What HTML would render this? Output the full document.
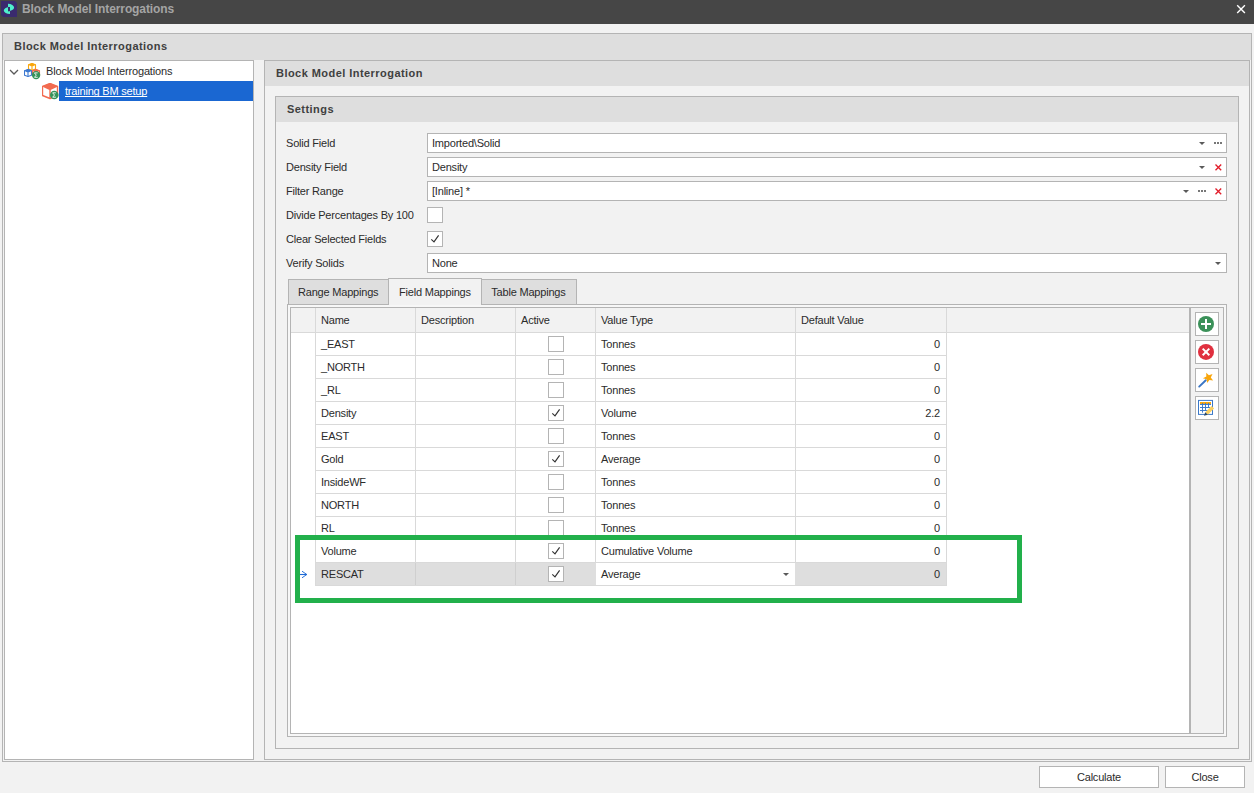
<!DOCTYPE html>
<html><head><meta charset="utf-8">
<style>
*{box-sizing:border-box;margin:0;padding:0}
html,body{width:1254px;height:793px;overflow:hidden;background:#f2f2f2;font-family:"Liberation Sans",sans-serif;font-size:11px;color:#2b2b2b;letter-spacing:-0.2px}
.a{position:absolute}
.b{border:1px solid #b4b4b4}
.t{position:absolute;white-space:pre;line-height:13px}
.bold{font-weight:bold;letter-spacing:0.45px;color:#404040}
.hdr{background:#dedede}
.inp{position:absolute;background:#fff;border:1px solid #b4b4b4;height:20px;left:427px;width:800px}
.inp span{position:absolute;left:4px;top:0;line-height:18px}
.lbl{position:absolute;left:286px;line-height:20px;height:20px}
.cb{position:absolute;width:16px;height:16px;background:#fff;border:1px solid #b4b4b4}
.cb.on::after{content:"";position:absolute;left:3px;top:2px;width:8px;height:9px;}
.hl{position:absolute;height:1px;background:#d9d9d9}
.vl{position:absolute;width:1px;background:#d9d9d9}
.cell{position:absolute;line-height:23px;white-space:pre}
</style></head><body>
<!-- title bar -->
<div class="a" style="left:0;top:0;width:1254px;height:24px;background:#464646"></div>
<svg class="a" style="left:1px;top:1px" width="16" height="16" viewBox="0 0 16 16">
<path d="M0 0H14L16 2V16H2L0 14Z" fill="#3a2a6e"/>
<path d="M7 2.8A6.1 3.7 0 0 1 7 10.2ZM9 6A6.2 3.5 0 0 0 9 13Z" fill="#4ff0cc"/>
<rect x="7" y="6" width="2" height="4.2" fill="#3a2a6e"/>
</svg>
<div class="t bold" style="left:22px;top:3px;color:#a4a4a4;font-size:12px;letter-spacing:-0.1px">Block Model Interrogations</div>
<svg class="a" style="left:1236px;top:4px" width="11" height="11" viewBox="0 0 11 11"><path d="M1.2 1.2L8.9 8.9M8.9 1.2L1.2 8.9" stroke="#fff" stroke-width="1.4"/></svg>

<!-- outer group -->
<div class="a b" style="left:2px;top:33px;width:1250px;height:729px"></div>
<div class="a hdr" style="left:3px;top:34px;width:1248px;height:26px"></div>
<div class="t bold" style="left:14px;top:40px">Block Model Interrogations</div>

<!-- tree -->
<div class="a b" style="left:4px;top:60px;width:250px;height:700px;background:#fff"></div>
<svg class="a" style="left:9px;top:68px" width="10" height="8"><path d="M1 2L5 6L9 2" fill="none" stroke="#5a5a5a" stroke-width="1.3"/></svg>
<svg class="a" style="left:24px;top:63px" width="17" height="17" viewBox="0 0 17 17"><path d="M8.0 0.5L11.5 1.76V6.04L8.0 7.3L4.5 6.04V1.76Z" fill="#fff" stroke="#f9a60c" stroke-width="1.1" stroke-linejoin="round"/><path d="M8.0 0L12 1.76L8.0 3.82L4 1.76Z" fill="#f9a60c"/><path d="M8.0 3.52V7.3" stroke="#f9a60c" stroke-width="1.1"/><path d="M4.0 6.5L7.5 7.76V12.24L4.0 13.5L0.5 12.24V7.76Z" fill="#fff" stroke="#3b78d0" stroke-width="1.1" stroke-linejoin="round"/><path d="M4.0 6L8 7.76L4.0 9.82L0 7.76Z" fill="#3b78d0"/><path d="M4.0 9.52V13.5" stroke="#3b78d0" stroke-width="1.1"/><path d="M12.0 6.5L15.5 7.76V12.24L12.0 13.5L8.5 12.24V7.76Z" fill="#fff" stroke="#f26b50" stroke-width="1.1" stroke-linejoin="round"/><path d="M12.0 6L16 7.76L12.0 9.82L8 7.76Z" fill="#f26b50"/><path d="M12.0 9.52V13.5" stroke="#f26b50" stroke-width="1.1"/><circle cx="12.1" cy="12.1" r="4.2" fill="#36935a"/><path d="M10.4 9.9H13.6M10.5 10L12.3 12.1L10.5 14.3H13.7" fill="none" stroke="#eaf6ee" stroke-width="1"/></svg>
<svg class="a" style="left:42px;top:83px" width="17" height="17" viewBox="0 0 17 17"><path d="M8.0 0.5L15.5 3.52V12.48L8.0 15.5L0.5 12.48V3.52Z" fill="#fff" stroke="#f26b50" stroke-width="1.4" stroke-linejoin="round"/><path d="M8.0 0L16 3.52L8.0 7.34L0 3.52Z" fill="#f26b50"/><path d="M8.0 7.04V15.5" stroke="#f26b50" stroke-width="1.4"/><circle cx="12.3" cy="12" r="4.3" fill="#36935a"/><path d="M10.6 9.8H13.8M10.7 9.9L12.5 12L10.7 14.2H13.9" fill="none" stroke="#eaf6ee" stroke-width="1"/></svg>
<div class="t" style="left:46px;top:65px;letter-spacing:-0.15px">Block Model Interrogations</div>
<div class="a" style="left:59px;top:81px;width:194px;height:20px;background:#1a67d2"></div>
<div class="t" style="left:65px;top:85px;color:#fff;text-decoration:underline;text-decoration-skip-ink:none">training BM setup</div>


<!-- right panel -->
<div class="a b" style="left:264px;top:60px;width:986px;height:700px"></div>
<div class="a hdr" style="left:265px;top:61px;width:984px;height:25px"></div>
<div class="t bold" style="left:276px;top:67px">Block Model Interrogation</div>

<!-- settings group -->
<div class="a b" style="left:275px;top:96px;width:964px;height:653px"></div>
<div class="a hdr" style="left:276px;top:97px;width:962px;height:25px"></div>
<div class="t bold" style="left:287px;top:103px">Settings</div>

<div id="form">
<div class="lbl" style="top:133px">Solid Field</div>
<div class="inp" style="top:133px"><span>Imported\Solid</span>
<svg class="a" style="left:771px;top:8px" width="6" height="3"><path d="M0 0H6L3 3Z" fill="#5a5a5a"/></svg>
<svg class="a" style="left:786px;top:8px" width="8" height="2"><rect x="0" y="0" width="2" height="2" fill="#777"/><rect x="3" y="0" width="2" height="2" fill="#777"/><rect x="6" y="0" width="2" height="2" fill="#777"/></svg>
</div>
<div class="lbl" style="top:157px">Density Field</div>
<div class="inp" style="top:157px"><span>Density</span>
<svg class="a" style="left:771px;top:8px" width="6" height="3"><path d="M0 0H6L3 3Z" fill="#5a5a5a"/></svg>
<svg class="a" style="left:787px;top:6px" width="7" height="7"><path d="M0.5 0.5L6.2 6.2M6.2 0.5L0.5 6.2" stroke="#e21d2a" stroke-width="1.35"/></svg>
</div>
<div class="lbl" style="top:181px">Filter Range</div>
<div class="inp" style="top:181px"><span>[Inline] *</span>
<svg class="a" style="left:755px;top:8px" width="6" height="3"><path d="M0 0H6L3 3Z" fill="#5a5a5a"/></svg>
<svg class="a" style="left:770px;top:8px" width="8" height="2"><rect x="0" y="0" width="2" height="2" fill="#777"/><rect x="3" y="0" width="2" height="2" fill="#777"/><rect x="6" y="0" width="2" height="2" fill="#777"/></svg>
<svg class="a" style="left:787px;top:6px" width="7" height="7"><path d="M0.5 0.5L6.2 6.2M6.2 0.5L0.5 6.2" stroke="#e21d2a" stroke-width="1.35"/></svg>
</div>
<div class="lbl" style="top:205px">Divide Percentages By 100</div>
<div class="cb" style="left:427px;top:207px"></div>
<div class="lbl" style="top:229px">Clear Selected Fields</div>
<div class="cb" style="left:427px;top:231px"><svg class="a" style="left:0;top:0" width="14" height="14"><path d="M3.3 7.4L6 9.9L10.6 3.3" fill="none" stroke="#333" stroke-width="1.15"/></svg></div>
<div class="lbl" style="top:253px">Verify Solids</div>
<div class="inp" style="top:253px"><span>None</span>
<svg class="a" style="left:787px;top:8px" width="6" height="3"><path d="M0 0H6L3 3Z" fill="#5a5a5a"/></svg>
</div>
</div>
<div id="tabs">
<div class="a b" style="left:287px;top:304px;width:940px;height:433px;background:#f7f7f7"></div>
<div class="a b" style="left:288px;top:279px;width:101px;height:26px;background:#dedede"></div>
<div class="a b" style="left:481px;top:279px;width:96px;height:26px;background:#dedede"></div>
<div class="a b" style="left:388px;top:278px;width:94px;height:27px;background:#f2f2f2;border-bottom:none"></div>
<div class="t" style="left:298px;top:286px">Range Mappings</div>
<div class="t" style="left:399px;top:286px">Field Mappings</div>
<div class="t" style="left:491.3px;top:286px">Table Mappings</div>
</div>
<div id="grid">
<div class="a b" style="left:290px;top:307px;width:934px;height:427px;background:#fff;border-right:none"></div>
<div class="a" style="left:291px;top:308px;width:898px;height:24px;background:#f2f2f2"></div>
<div class="a" style="left:1189px;top:307px;width:2px;height:427px;background:#b4b4b4"></div>
<div class="a" style="left:1191px;top:308px;width:32px;height:425px;background:#f2f2f2"></div>
<div class="a" style="left:1223px;top:307px;width:1px;height:427px;background:#b4b4b4"></div>
<div class="hl" style="left:291px;top:332px;width:898px"></div>
<div class="vl" style="left:315px;top:308px;height:277px"></div>
<div class="vl" style="left:415px;top:308px;height:277px"></div>
<div class="vl" style="left:515px;top:308px;height:277px"></div>
<div class="vl" style="left:595px;top:308px;height:277px"></div>
<div class="vl" style="left:795px;top:308px;height:277px"></div>
<div class="vl" style="left:946px;top:308px;height:277px"></div>
<div class="a" style="left:316px;top:563px;width:630px;height:22px;background:#dedede"></div>
<div class="a" style="left:596px;top:563px;width:199px;height:22px;background:#fff"></div>
<div class="vl" style="left:415px;top:563px;height:22px;background:#cfcfcf"></div>
<div class="vl" style="left:515px;top:563px;height:22px;background:#cfcfcf"></div>
<div class="hl" style="left:315px;top:355px;width:632px"></div>
<div class="hl" style="left:315px;top:378px;width:632px"></div>
<div class="hl" style="left:315px;top:401px;width:632px"></div>
<div class="hl" style="left:315px;top:424px;width:632px"></div>
<div class="hl" style="left:315px;top:447px;width:632px"></div>
<div class="hl" style="left:315px;top:470px;width:632px"></div>
<div class="hl" style="left:315px;top:493px;width:632px"></div>
<div class="hl" style="left:315px;top:516px;width:632px"></div>
<div class="hl" style="left:315px;top:539px;width:632px"></div>
<div class="hl" style="left:315px;top:562px;width:632px"></div>
<div class="hl" style="left:315px;top:585px;width:632px"></div>
<div class="cell" style="left:321px;top:308px;line-height:24px">Name</div>
<div class="cell" style="left:421px;top:308px;line-height:24px">Description</div>
<div class="cell" style="left:521px;top:308px;line-height:24px">Active</div>
<div class="cell" style="left:601px;top:308px;line-height:24px">Value Type</div>
<div class="cell" style="left:801px;top:308px;line-height:24px">Default Value</div>
<div class="cell" style="left:321px;top:333px;line-height:22px">_EAST</div>
<div class="cb" style="left:548px;top:336px"></div>
<div class="cell" style="left:601px;top:333px;line-height:22px">Tonnes</div>
<div class="cell" style="left:796px;top:333px;width:144px;text-align:right;line-height:22px">0</div>
<div class="cell" style="left:321px;top:356px;line-height:22px">_NORTH</div>
<div class="cb" style="left:548px;top:359px"></div>
<div class="cell" style="left:601px;top:356px;line-height:22px">Tonnes</div>
<div class="cell" style="left:796px;top:356px;width:144px;text-align:right;line-height:22px">0</div>
<div class="cell" style="left:321px;top:379px;line-height:22px">_RL</div>
<div class="cb" style="left:548px;top:382px"></div>
<div class="cell" style="left:601px;top:379px;line-height:22px">Tonnes</div>
<div class="cell" style="left:796px;top:379px;width:144px;text-align:right;line-height:22px">0</div>
<div class="cell" style="left:321px;top:402px;line-height:22px">Density</div>
<div class="cb" style="left:548px;top:405px"><svg class="a" style="left:0;top:0" width="14" height="14"><path d="M3.3 7.4L6 9.9L10.6 3.3" fill="none" stroke="#333" stroke-width="1.15"/></svg></div>
<div class="cell" style="left:601px;top:402px;line-height:22px">Volume</div>
<div class="cell" style="left:796px;top:402px;width:144px;text-align:right;line-height:22px">2.2</div>
<div class="cell" style="left:321px;top:425px;line-height:22px">EAST</div>
<div class="cb" style="left:548px;top:428px"></div>
<div class="cell" style="left:601px;top:425px;line-height:22px">Tonnes</div>
<div class="cell" style="left:796px;top:425px;width:144px;text-align:right;line-height:22px">0</div>
<div class="cell" style="left:321px;top:448px;line-height:22px">Gold</div>
<div class="cb" style="left:548px;top:451px"><svg class="a" style="left:0;top:0" width="14" height="14"><path d="M3.3 7.4L6 9.9L10.6 3.3" fill="none" stroke="#333" stroke-width="1.15"/></svg></div>
<div class="cell" style="left:601px;top:448px;line-height:22px">Average</div>
<div class="cell" style="left:796px;top:448px;width:144px;text-align:right;line-height:22px">0</div>
<div class="cell" style="left:321px;top:471px;line-height:22px">InsideWF</div>
<div class="cb" style="left:548px;top:474px"></div>
<div class="cell" style="left:601px;top:471px;line-height:22px">Tonnes</div>
<div class="cell" style="left:796px;top:471px;width:144px;text-align:right;line-height:22px">0</div>
<div class="cell" style="left:321px;top:494px;line-height:22px">NORTH</div>
<div class="cb" style="left:548px;top:497px"></div>
<div class="cell" style="left:601px;top:494px;line-height:22px">Tonnes</div>
<div class="cell" style="left:796px;top:494px;width:144px;text-align:right;line-height:22px">0</div>
<div class="cell" style="left:321px;top:517px;line-height:22px">RL</div>
<div class="cb" style="left:548px;top:520px"></div>
<div class="cell" style="left:601px;top:517px;line-height:22px">Tonnes</div>
<div class="cell" style="left:796px;top:517px;width:144px;text-align:right;line-height:22px">0</div>
<div class="cell" style="left:321px;top:540px;line-height:22px">Volume</div>
<div class="cb" style="left:548px;top:543px"><svg class="a" style="left:0;top:0" width="14" height="14"><path d="M3.3 7.4L6 9.9L10.6 3.3" fill="none" stroke="#333" stroke-width="1.15"/></svg></div>
<div class="cell" style="left:601px;top:540px;line-height:22px">Cumulative Volume</div>
<div class="cell" style="left:796px;top:540px;width:144px;text-align:right;line-height:22px">0</div>
<div class="cell" style="left:321px;top:563px;line-height:22px">RESCAT</div>
<div class="cb" style="left:548px;top:566px"><svg class="a" style="left:0;top:0" width="14" height="14"><path d="M3.3 7.4L6 9.9L10.6 3.3" fill="none" stroke="#333" stroke-width="1.15"/></svg></div>
<div class="cell" style="left:601px;top:563px;line-height:22px">Average</div>
<div class="cell" style="left:796px;top:563px;width:144px;text-align:right;line-height:22px">0</div>
<svg class="a" style="left:783px;top:573px" width="6" height="3"><path d="M0 0H6L3 3Z" fill="#5a5a5a"/></svg>
<svg class="a" style="left:296px;top:569px" width="14" height="10"><path d="M1 5.5H10.8" stroke="#1f6ad6" stroke-width="1.1"/><path d="M6 2.2L10.8 5.5L6 8.8" fill="none" stroke="#1f6ad6" stroke-width="0.95"/></svg>
<div class="a" style="left:1195px;top:312px;width:24px;height:24px;background:#fff;border:1px solid #b4b4b4"></div>
<div class="a" style="left:1195px;top:340px;width:24px;height:24px;background:#fff;border:1px solid #b4b4b4"></div>
<div class="a" style="left:1195px;top:368px;width:24px;height:24px;background:#fff;border:1px solid #b4b4b4"></div>
<div class="a" style="left:1195px;top:396px;width:24px;height:24px;background:#fff;border:1px solid #b4b4b4"></div>
<svg class="a" style="left:1195px;top:312px" width="24" height="24" viewBox="0 0 24 24"><circle cx="11" cy="12" r="8" fill="#3b9159"/><rect x="6" y="11" width="10" height="2" fill="#fff"/><rect x="10" y="7" width="2" height="10" fill="#fff"/></svg>
<svg class="a" style="left:1195px;top:340px" width="24" height="24" viewBox="0 0 24 24"><circle cx="11" cy="11.9" r="8" fill="#e0303f"/><path d="M7.7 8.6L14.3 15.2M14.3 8.6L7.7 15.2" stroke="#fff" stroke-width="2"/></svg>
<svg class="a" style="left:1195px;top:368px" width="24" height="24" viewBox="0 0 24 24"><path d="M4.2 18.6L10.8 12.2" stroke="#3a75c4" stroke-width="1.9" stroke-linecap="round"/><path d="M11.21 4.66L13.92 7.36L17.52 6.06L15.79 9.47L18.14 12.49L14.36 11.90L12.21 15.07L11.60 11.29L7.93 10.23L11.33 8.48Z" fill="#f9a60c"/></svg>
<svg class="a" style="left:1195px;top:396px" width="24" height="24" viewBox="0 0 24 24"><rect x="3.5" y="4.4" width="14" height="14" fill="#fff" stroke="#3a78c8" stroke-width="1"/><rect x="5" y="6" width="11" height="2.2" fill="#f9a60c"/><path d="M5 8.5H16M5 11.5H15M5 14.5H13M7.5 7V16.7M10.5 7V15M13.5 7V12" stroke="#3a78c8" stroke-width="0.95"/><path d="M10.3 16.2L16.6 9.9L19.1 12.4L12.8 18.7Z" fill="#fcd060"/><path d="M10.3 16.2L12.8 18.7L9 19.8Z" fill="#2b4765"/></svg>
</div>
<div id="bottom">
<div class="a" style="left:1039px;top:766px;width:120px;height:22px;background:#fff;border:1px solid #b4b4b4;text-align:center;line-height:20px">Calculate</div>
<div class="a" style="left:1165px;top:766px;width:80px;height:22px;background:#fff;border:1px solid #b4b4b4;text-align:center;line-height:20px">Close</div>
<div class="a" style="left:295px;top:535px;width:727px;height:68px;border:5px solid #22b04b"></div>
</div>
</body></html>
